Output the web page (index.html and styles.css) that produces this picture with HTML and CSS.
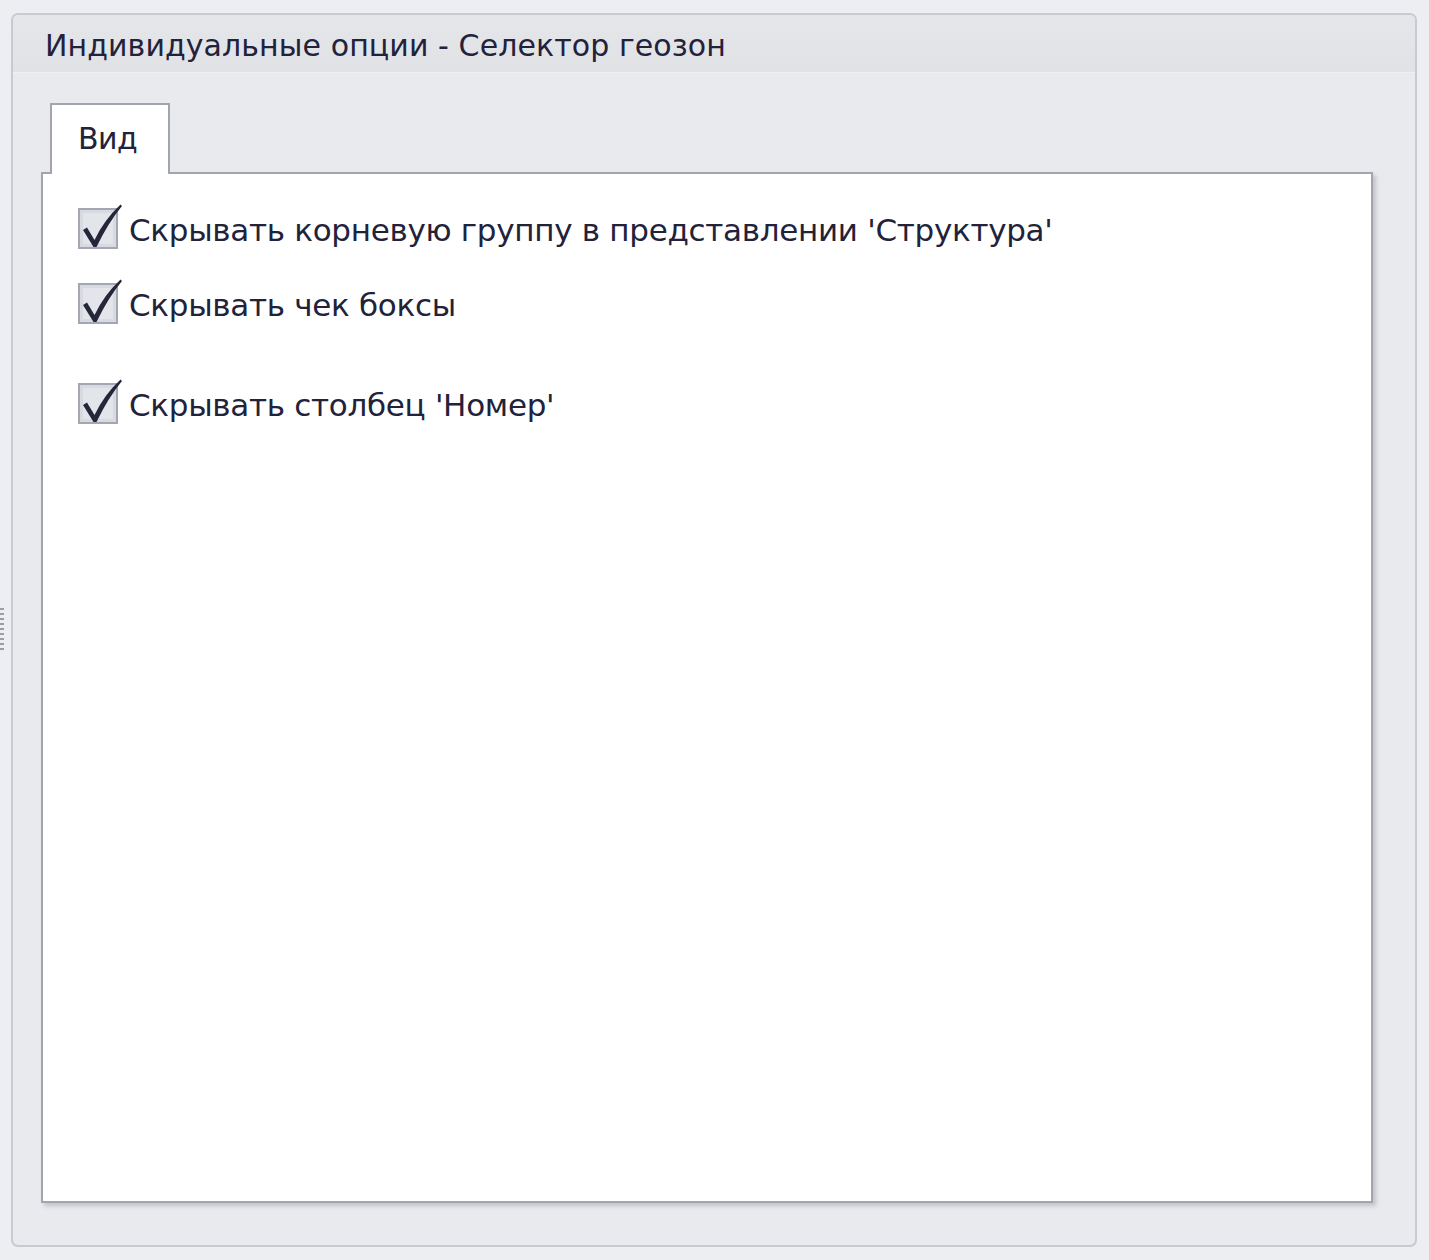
FILE: index.html
```html
<!DOCTYPE html>
<html lang="ru">
<head>
<meta charset="utf-8">
<link rel="stylesheet" href="styles.css">
</head>
<body>
<div class="grip"></div>
<section class="group">
  <header class="group-header">Индивидуальные опции - Селектор геозон</header>
  <div class="group-body">
    <div class="tabs">
      <div class="tab active">Вид</div>
    </div>
    <div class="panel">
      <label class="check row1">
        <svg class="cb" viewBox="0 0 46 48" width="46" height="48"><rect x="1" y="6" width="38" height="39" fill="#d8dae1" stroke="#a4a6b1" stroke-width="2"/><rect x="5" y="10" width="30" height="31" fill="#e4e5ea"/><path d="M5 27 L9 24.5 L16.5 37 Q26 17 42.5 1.5 L44 3 Q30 20 18.5 44 L15.5 44 Z" fill="#26263a"/></svg>
        <span>Скрывать корневую группу в представлении 'Структура'</span>
      </label>
      <label class="check row2">
        <svg class="cb" viewBox="0 0 46 48" width="46" height="48"><rect x="1" y="6" width="38" height="39" fill="#d8dae1" stroke="#a4a6b1" stroke-width="2"/><rect x="5" y="10" width="30" height="31" fill="#e4e5ea"/><path d="M5 27 L9 24.5 L16.5 37 Q26 17 42.5 1.5 L44 3 Q30 20 18.5 44 L15.5 44 Z" fill="#26263a"/></svg>
        <span>Скрывать чек боксы</span>
      </label>
      <label class="check row3">
        <svg class="cb" viewBox="0 0 46 48" width="46" height="48"><rect x="1" y="6" width="38" height="39" fill="#d8dae1" stroke="#a4a6b1" stroke-width="2"/><rect x="5" y="10" width="30" height="31" fill="#e4e5ea"/><path d="M5 27 L9 24.5 L16.5 37 Q26 17 42.5 1.5 L44 3 Q30 20 18.5 44 L15.5 44 Z" fill="#26263a"/></svg>
        <span>Скрывать столбец 'Номер'</span>
      </label>
    </div>
  </div>
</section>
</body>
</html>
```
FILE: styles.css
```css
html, body {
  margin: 0;
  padding: 0;
}
body {
  background: #edeef1;
  width: 1429px;
  height: 1260px;
  overflow: hidden;
  font-family: "DejaVu Sans", "Noto Sans", sans-serif;
  color: #22223a;
  position: relative;
}
.grip {
  position: absolute;
  left: 0;
  top: 608px;
  width: 4px;
  height: 42px;
  background: repeating-linear-gradient(to bottom, #9a9ca6 0 2px, transparent 2px 5px);
}
.group {
  margin: 13px 0 0 11px;
  width: 1406px;
  height: 1234px;
  box-sizing: border-box;
  border: 2px solid #c9cad1;
  border-radius: 7px;
  background: #e9eaee;
  display: flex;
  flex-direction: column;
  overflow: hidden;
}
.group-header {
  height: 58px;
  box-sizing: border-box;
  background: linear-gradient(#e5e6ea, #e1e2e6);
  border-bottom: 1px solid #eef0f3;
  padding: 13px 0 0 32px;
  font-size: 30px;
  line-height: 36px;
  letter-spacing: 0.08px;
}
.group-body {
  flex: 1;
  padding: 30px 42px 42px 28px;
  display: flex;
  flex-direction: column;
}
.tabs {
  display: flex;
  padding-left: 9px;
  height: 69px;
}
.tab {
  width: 120px;
  box-sizing: border-box;
  background: #fff;
  border: 2px solid #a3a5ae;
  border-bottom: none;
  position: relative;
  z-index: 1;
  height: 71px;
  padding: 16px 0 0 26px;
  font-size: 30px;
  line-height: 36px;
  letter-spacing: -0.5px;
}
.panel {
  flex: 1;
  background: #fff;
  border: 2px solid #a3a5ae;
  box-shadow: 3px 3px 4px rgba(120, 122, 135, 0.35);
  position: relative;
  padding: 29px 0 0 35px;
  display: flex;
  flex-direction: column;
}
.check {
  display: flex;
  align-items: flex-start;
  height: 48px;
  font-size: 31px;
  letter-spacing: -0.3px;
}
.check span {
  margin-left: 5px;
  margin-top: 9px;
  line-height: 36px;
}
.cb {
  flex: none;
  display: block;
}
.row2 { margin-top: 27px; }
.row3 { margin-top: 52px; }
```
